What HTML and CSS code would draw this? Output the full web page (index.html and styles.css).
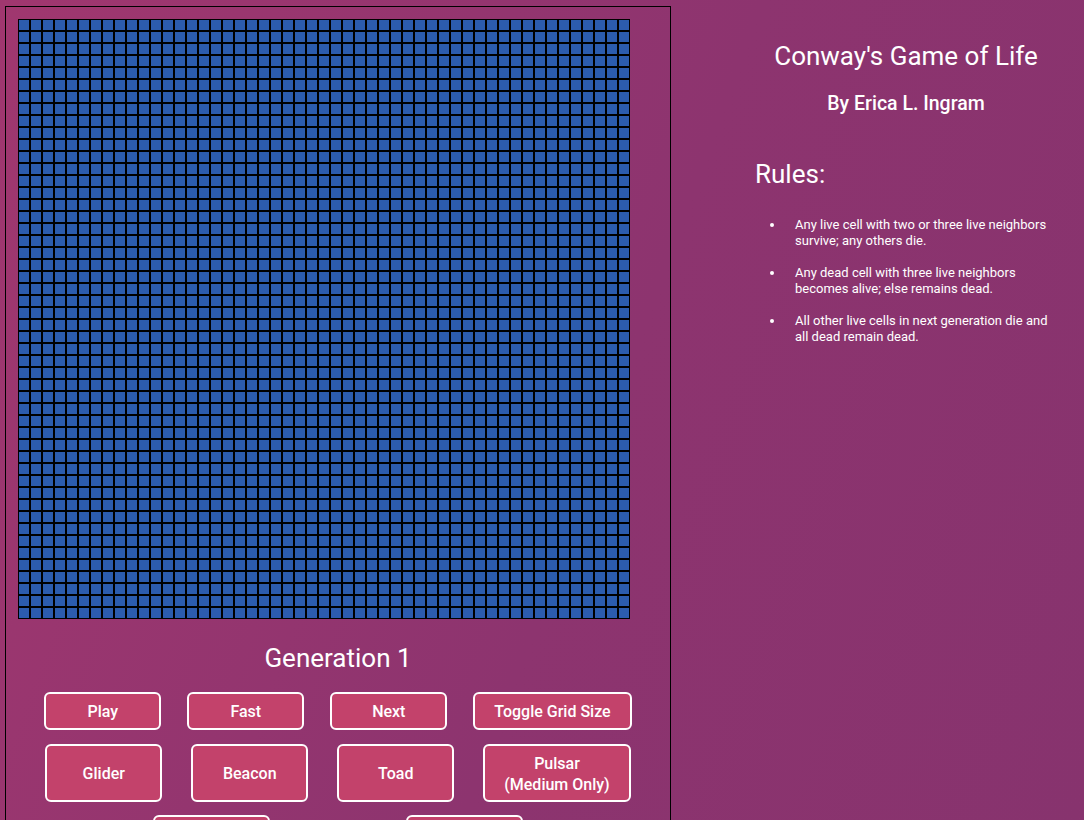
FILE: index.html
```html
<!DOCTYPE html>
<html lang="en">
<head>
<meta charset="utf-8">
<title>Conway's Game of Life</title>
<link rel="stylesheet" href="styles.css">
</head>
<body>
<div class="page">
  <section class="board">
    <div class="grid" id="grid"></div>
    <h2 class="generation">Generation 1</h2>
    <div class="controls controls-main">
      <button class="btn">Play</button>
      <button class="btn">Fast</button>
      <button class="btn">Next</button>
      <button class="btn">Toggle Grid Size</button>
    </div>
    <div class="controls controls-presets">
      <button class="btn btn-tall">Glider</button>
      <button class="btn btn-tall">Beacon</button>
      <button class="btn btn-tall">Toad</button>
      <button class="btn btn-tall btn-wide">Pulsar<br>(Medium Only)</button>
    </div>
    <div class="controls controls-extra">
      <button class="btn btn-tall">Random</button>
      <button class="btn btn-tall">Clear</button>
    </div>
  </section>
  <aside class="info">
    <h1 class="title">Conway's Game of Life</h1>
    <p class="author">By Erica L. Ingram</p>
    <h2 class="rules-title">Rules:</h2>
    <ul class="rules">
      <li>Any live cell with two or three live neighbors survive; any others die.</li>
      <li>Any dead cell with three live neighbors becomes alive; else remains dead.</li>
      <li>All other live cells in next generation die and all dead remain dead.</li>
    </ul>
  </aside>
</div>
<script src="script.js"></script>
</body>
</html>
```

FILE: styles.css
```css
html, body {
  margin: 0;
  padding: 0;
}

body {
  min-height: 100vh;
  background: linear-gradient(110deg, #a0376f 0%, #8d346f 55%, #87336e 100%);
  background-attachment: fixed;
  color: #ffffff;
  font-family: Roboto, "Liberation Sans", Arial, sans-serif;
}

.page {
  display: flex;
  align-items: flex-start;
  padding: 6px 0 0 5px;
}

.board {
  width: 640px;
  padding: 12px;
  border: 1px solid #000;
  border-bottom: none;
  display: flex;
  flex-direction: column;
  align-items: center;
}

.grid {
  align-self: flex-start;
  display: grid;
  grid-template-columns: repeat(51, 12px);
  grid-auto-rows: 12px;
}

.cell {
  box-sizing: border-box;
  width: 12px;
  height: 12px;
  border: 1px solid #000;
  background: #2c5cae;
}

.generation {
  margin: 24px 0 0;
  font-size: 26px;
  line-height: 30px;
  font-weight: 400;
}

.controls {
  display: flex;
  justify-content: center;
}

.controls-main {
  margin-top: 19px;
  gap: 26px;
}

.controls-presets {
  margin-top: 14px;
  gap: 29px;
}

.controls-extra {
  margin-top: 13px;
  gap: 136px;
}

.btn {
  box-sizing: border-box;
  min-width: 117px;
  height: 38px;
  padding: 1px 19px 0;
  border: 2px solid #fff;
  border-radius: 6px;
  background: #c3426b;
  color: #fff;
  font-family: Roboto, "Liberation Sans", Arial, sans-serif;
  font-size: 16px;
  font-weight: 500;
  line-height: 21px;
}

.btn-tall {
  height: 58px;
  min-width: 117px;
}

.info {
  width: 356px;
  margin-left: 57px;
  padding-top: 35px;
}

.title {
  margin: 0;
  text-align: center;
  font-size: 26px;
  line-height: 30px;
  font-weight: 400;
}

.author {
  margin: 22px 0 0;
  text-align: center;
  font-size: 19.5px;
  line-height: 22px;
  font-weight: 500;
}

.rules-title {
  margin: 44px 0 0 27px;
  font-size: 26px;
  line-height: 30px;
  font-weight: 400;
}

.rules {
  margin: 28px 0 0 27px;
  padding: 0 34px 0 30px;
  font-size: 13px;
  line-height: 16px;
}

.rules li {
  padding-left: 10px;
  margin-bottom: 16px;
}
```

FILE: script.js
```js
(function () {
  var grid = document.getElementById('grid');
  var frag = document.createDocumentFragment();
  for (var i = 0; i < 51 * 50; i++) {
    var c = document.createElement('div');
    c.className = 'cell';
    frag.appendChild(c);
  }
  grid.appendChild(frag);
})();
```
